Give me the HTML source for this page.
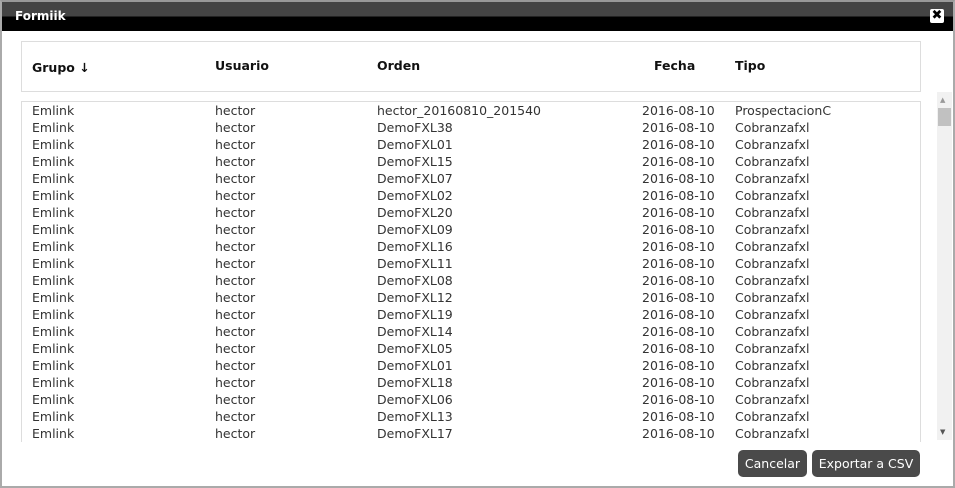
<!DOCTYPE html><html><head><style>
body{margin:0;width:955px;height:488px;background:#888;overflow:hidden;font-family:"DejaVu Sans","Liberation Sans",sans-serif;}
.dlg{position:absolute;left:0;top:0;width:951px;height:484px;background:#fff;border:2px solid #aaa;border-top-color:#999;}
.bar{position:absolute;left:0;top:0;width:951px;height:29px;background:linear-gradient(#444 0,#444 50%,#000 50%,#000 100%);}
.bar span{position:absolute;left:13px;top:7px;color:#fff;font-weight:bold;font-size:12px;}
.x{position:absolute;left:928px;top:7px;width:14px;height:14px;background:#fff;border-radius:2px;color:#000;font-size:13px;font-weight:bold;line-height:14px;text-align:center;}
.hd{position:absolute;left:19px;top:39px;width:898px;height:49px;border:1px solid #ddd;}
.hd div,.r div{position:absolute;white-space:nowrap;}
.hd div{top:16px;font-weight:bold;font-size:12.5px;color:#111;}
.bd{position:absolute;left:19px;top:99px;width:898px;height:340px;border-top:1px solid #ddd;border-left:1px solid #ddd;border-right:1px solid #ddd;overflow:hidden;}
.r{position:relative;height:17px;font-size:12.5px;color:#333;line-height:17px;}
.sb{position:absolute;left:935px;top:90px;width:15px;height:348px;background:#f1f1f1;}
.btn{position:absolute;top:448px;height:27px;background:#4a4a4a;color:#fff;border-radius:5px;font-size:12.5px;line-height:27px;text-align:center;}
</style></head><body><div class="dlg">
<div class="bar"><span>Formiik</span><div class="x">✖</div></div>
<div class="hd"><div style="left:10px;top:18px">Grupo ↓</div><div style="left:193px">Usuario</div><div style="left:355px">Orden</div><div style="left:632px">Fecha</div><div style="left:713px">Tipo</div></div>
<div class="bd" id="b"></div>
<div class="sb"><div style="position:absolute;left:3px;top:4px;font-size:7px;color:#999">▲</div><div style="position:absolute;left:1px;top:16px;width:13px;height:18px;background:#c1c1c1"></div><div style="position:absolute;left:3px;bottom:4px;font-size:7px;color:#555">▼</div></div>
<div class="btn" style="left:736px;width:69px">Cancelar</div>
<div class="btn" style="left:810px;width:108px">Exportar a CSV</div>
</div>
<script>
var o=["hector_20160810_201540","DemoFXL38","DemoFXL01","DemoFXL15","DemoFXL07","DemoFXL02","DemoFXL20","DemoFXL09","DemoFXL16","DemoFXL11","DemoFXL08","DemoFXL12","DemoFXL19","DemoFXL14","DemoFXL05","DemoFXL01","DemoFXL18","DemoFXL06","DemoFXL13","DemoFXL17"];
var h="";o.forEach(function(x,i){h+='<div class="r"><div style="left:10px">Emlink</div><div style="left:193px">hector</div><div style="left:355px">'+x+'</div><div style="left:620px">2016-08-10</div><div style="left:713px">'+(i?'Cobranzafxl':'ProspectacionC')+'</div></div>';});
document.getElementById('b').innerHTML=h;
</script></body></html>
